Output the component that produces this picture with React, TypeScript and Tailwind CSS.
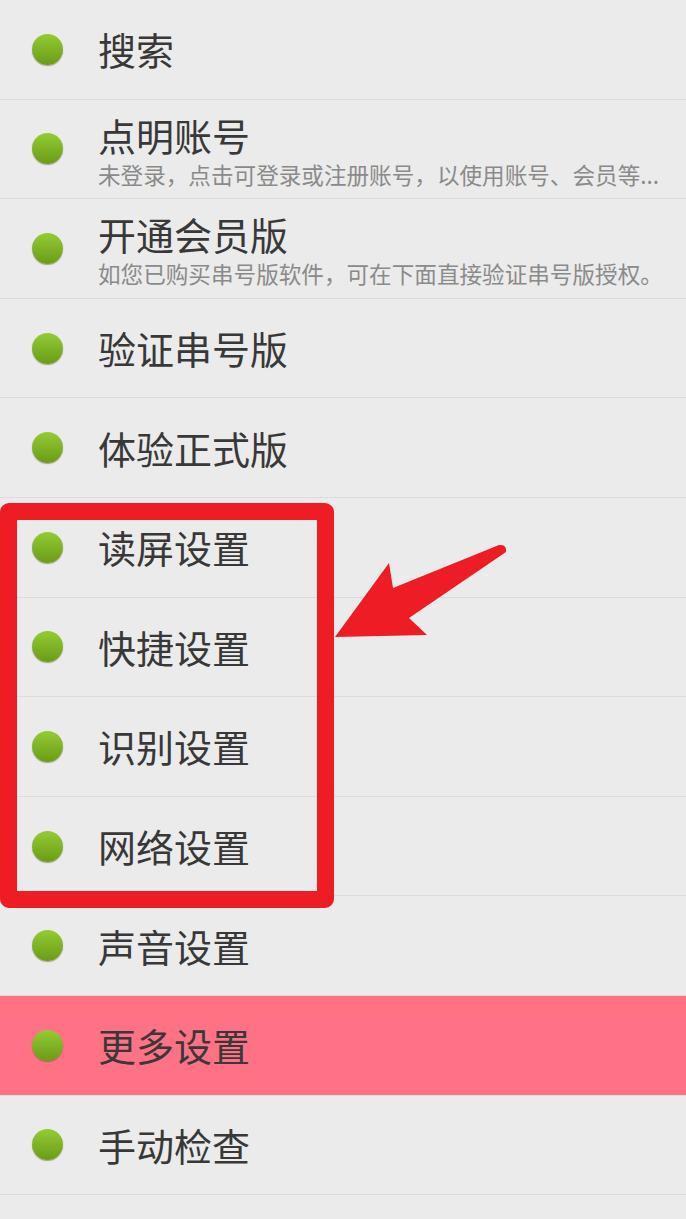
import React from 'react';

type Item = { title: string; sub?: string; active?: boolean };

const items: Item[] = [
  { title: '搜索' },
  { title: '点明账号', sub: '未登录，点击可登录或注册账号，以使用账号、会员等...' },
  { title: '开通会员版', sub: '如您已购买串号版软件，可在下面直接验证串号版授权。' },
  { title: '验证串号版' },
  { title: '体验正式版' },
  { title: '读屏设置' },
  { title: '快捷设置' },
  { title: '识别设置' },
  { title: '网络设置' },
  { title: '声音设置' },
  { title: '更多设置', active: true },
  { title: '手动检查' },
];

function Dot() {
  return (
    <div className="h-[31px] w-[31px] shrink-0 rounded-full bg-gradient-to-b from-[#94cc34] to-[#6a9c16] shadow-[0_1px_1px_rgba(90,60,40,0.45)]" />
  );
}

export default function App() {
  return (
    <div
      className="relative h-[1219px] w-[686px] overflow-hidden bg-[#ebebeb]"
      style={{ fontFamily: '"Noto Sans CJK SC", "Noto Sans", sans-serif' }}
    >
      <ul className="flex flex-col">
        {items.map((it) => (
          <li
            key={it.title}
            className={`flex h-[99.6px] items-center gap-[35px] border-b border-[#dcdcdc] pl-[32px] pr-4 ${
              it.active ? 'bg-[#ff7285]' : ''
            }`}
          >
            <Dot />
            <div className="flex min-w-0 flex-col">
              <span className={`text-[38px] text-[#383838] ${it.sub ? 'leading-[52px]' : 'leading-[44px]'}`}>
                {it.title}
              </span>
              {it.sub && (
                <span className="whitespace-nowrap text-[22.6px] leading-[28px] text-[#8a8a8a]">
                  {it.sub}
                </span>
              )}
            </div>
          </li>
        ))}
      </ul>

      {/* annotation: red frame */}
      <div className="pointer-events-none absolute left-0 top-[503px] h-[405px] w-[334px] rounded-[9px] border-[17px] border-[#ee1c25]" />

      {/* annotation: arrow */}
      <svg
        className="pointer-events-none absolute left-0 top-0"
        width="686"
        height="1219"
        viewBox="0 0 686 1219"
      >
        <path
          d="M335 637 L389 563 L393 588 L499 545 Q507 544 506 552 L409 618 L427 635 Z"
          fill="#ee1c25"
        />
      </svg>
    </div>
  );
}
